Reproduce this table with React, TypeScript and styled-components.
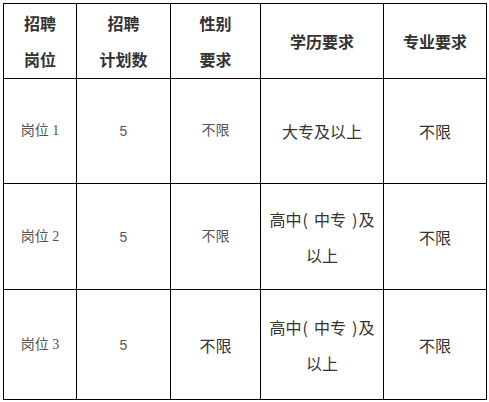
import React from "react"
import styled, { createGlobalStyle } from "styled-components"

const GlobalStyles = createGlobalStyle`
  body {
    margin: 0;
    background: #fff;
    font-family: "Noto Sans CJK SC", "Noto Sans", sans-serif;
  }
`

const Page = styled.div`
  padding: 3px 0 0 3px;
`

const Grid = styled.div`
  display: grid;
  grid-template-columns: 73px 94px 90px 123px 103px;
  grid-template-rows: 75px 105px 106px 110px;
  width: 484px;
  border-left: 1px solid #000;
  border-top: 1px solid #000;
  box-sizing: border-box;
`

type Tone = "head" | "small" | "num" | "normal"

const fonts: Record<Tone, string> = {
  head: '"Noto Sans CJK SC", sans-serif',
  normal: '"Noto Sans CJK SC", sans-serif',
  small: '"Liberation Serif", "Noto Sans CJK SC", serif',
  num: '"Liberation Sans", "Noto Sans CJK SC", sans-serif',
}

const Cell = styled.div<{ $tone: Tone }>`
  box-sizing: border-box;
  border-right: 1px solid #000;
  border-bottom: 1px solid #000;
  display: flex;
  align-items: center;
  justify-content: center;
  text-align: center;
  padding: 0 2px;
  font-size: ${(p) => (p.$tone === "small" || p.$tone === "num" ? "14px" : "16px")};
  font-weight: ${(p) => (p.$tone === "head" ? 700 : 400)};
  color: ${(p) => (p.$tone === "small" || p.$tone === "num" ? "#555" : "#333")};
  line-height: ${(p) => (p.$tone === "small" || p.$tone === "num" ? "20px" : "36px")};
  font-family: ${(p) => fonts[p.$tone]};
`

const Text = styled.span`
  display: block;
  white-space: nowrap;
`

const Paren = styled.span<{ $side: "open" | "close" }>`
  padding: ${(p) => (p.$side === "open" ? "0 6px 0 1px" : "0 1px 0 6px")};
`

const HighSchool = () => (
  <Text>
    高中<Paren $side="open">(</Paren>中专<Paren $side="close">)</Paren>及<br />以上
  </Text>
)

const rows: { label: string; count: string; sex: string; sexTone: Tone; edu: React.ReactNode }[] = [
  { label: "岗位 1", count: "5", sex: "不限", sexTone: "small", edu: <Text>大专及以上</Text> },
  { label: "岗位 2", count: "5", sex: "不限", sexTone: "small", edu: <HighSchool /> },
  { label: "岗位 3", count: "5", sex: "不限", sexTone: "normal", edu: <HighSchool /> },
]

export default function App() {
  return (
    <Page>
      <GlobalStyles />
      <Grid>
        <Cell $tone="head">
          <Text>
            招聘<br />岗位
          </Text>
        </Cell>
        <Cell $tone="head">
          <Text>
            招聘<br />计划数
          </Text>
        </Cell>
        <Cell $tone="head">
          <Text>
            性别<br />要求
          </Text>
        </Cell>
        <Cell $tone="head">学历要求</Cell>
        <Cell $tone="head">专业要求</Cell>
        {rows.map((r) => (
          <React.Fragment key={r.label}>
            <Cell $tone="small">{r.label}</Cell>
            <Cell $tone="num">{r.count}</Cell>
            <Cell $tone={r.sexTone}>{r.sex}</Cell>
            <Cell $tone="normal">{r.edu}</Cell>
            <Cell $tone="normal">不限</Cell>
          </React.Fragment>
        ))}
      </Grid>
    </Page>
  )
}
